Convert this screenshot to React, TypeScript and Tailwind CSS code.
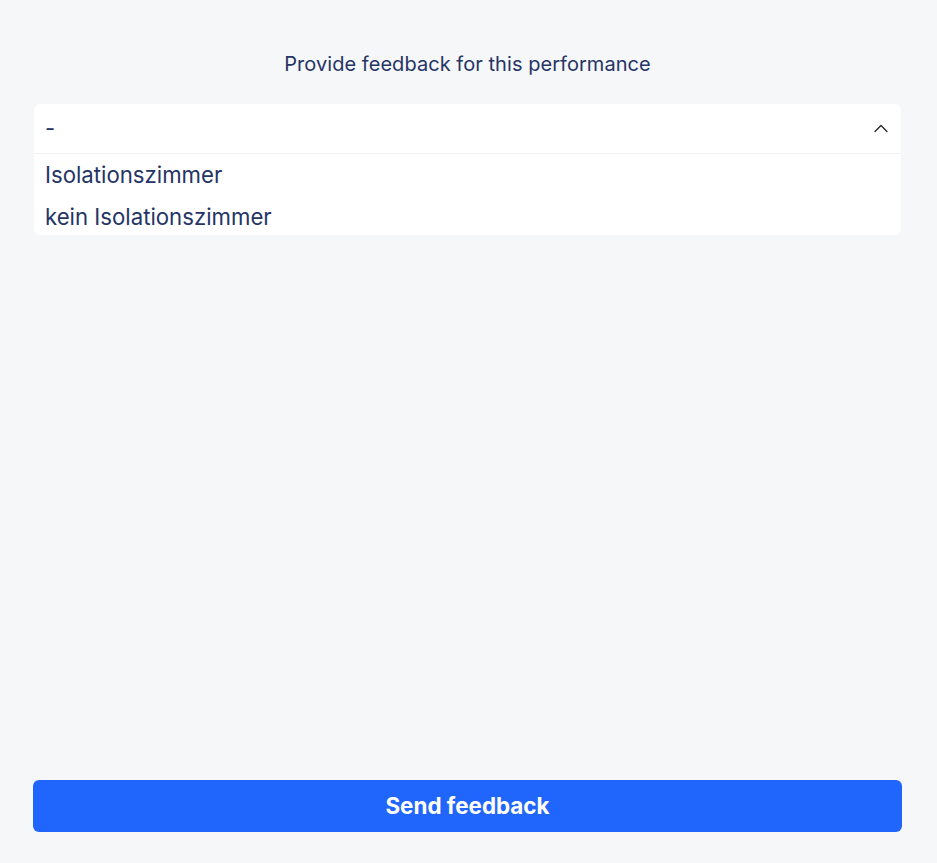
export default function App() {
  return (
    <div
      className="min-h-screen w-full bg-[#f5f7f9] flex flex-col pl-[33px] pr-[35px] pb-[31px]"
      style={{ fontFamily: "Inter, 'Noto Sans', sans-serif" }}
    >
      <h1 className="text-center text-[20px] leading-[28px] text-[#253465] mt-[50px] font-normal tracking-[0.05px]">
        Provide feedback for this performance
      </h1>
      <div className="mt-[26px] ml-[1px] mr-[1px] bg-white rounded-[6px] overflow-hidden">
        <div className="h-[50px] flex items-center justify-between pl-[11px] pr-[12px] border-b border-[#f0f2f4]">
          <span className="text-[22px] text-[#253465]">-</span>
          <svg width="16" height="16" viewBox="0 0 16 16" fill="none">
            <path d="M2 10.5L8 4.5L14 10.5" stroke="#222" strokeWidth="1.3" strokeLinecap="round" strokeLinejoin="round" />
          </svg>
        </div>
        <div className="flex flex-col">
          <div className="pl-[11px] h-[42px] flex items-center text-[22.2px] text-[#253465]">Isolationszimmer</div>
          <div className="pl-[11px] h-[39px] flex items-center pt-[2px] text-[22.2px] text-[#253465]">kein Isolationszimmer</div>
        </div>
      </div>
      <div className="flex-1" />
      <button className="h-[52px] w-full rounded-[6px] bg-[#2166fc] text-white font-bold text-[22.4px]">
        Send feedback
      </button>
    </div>
  );
}
